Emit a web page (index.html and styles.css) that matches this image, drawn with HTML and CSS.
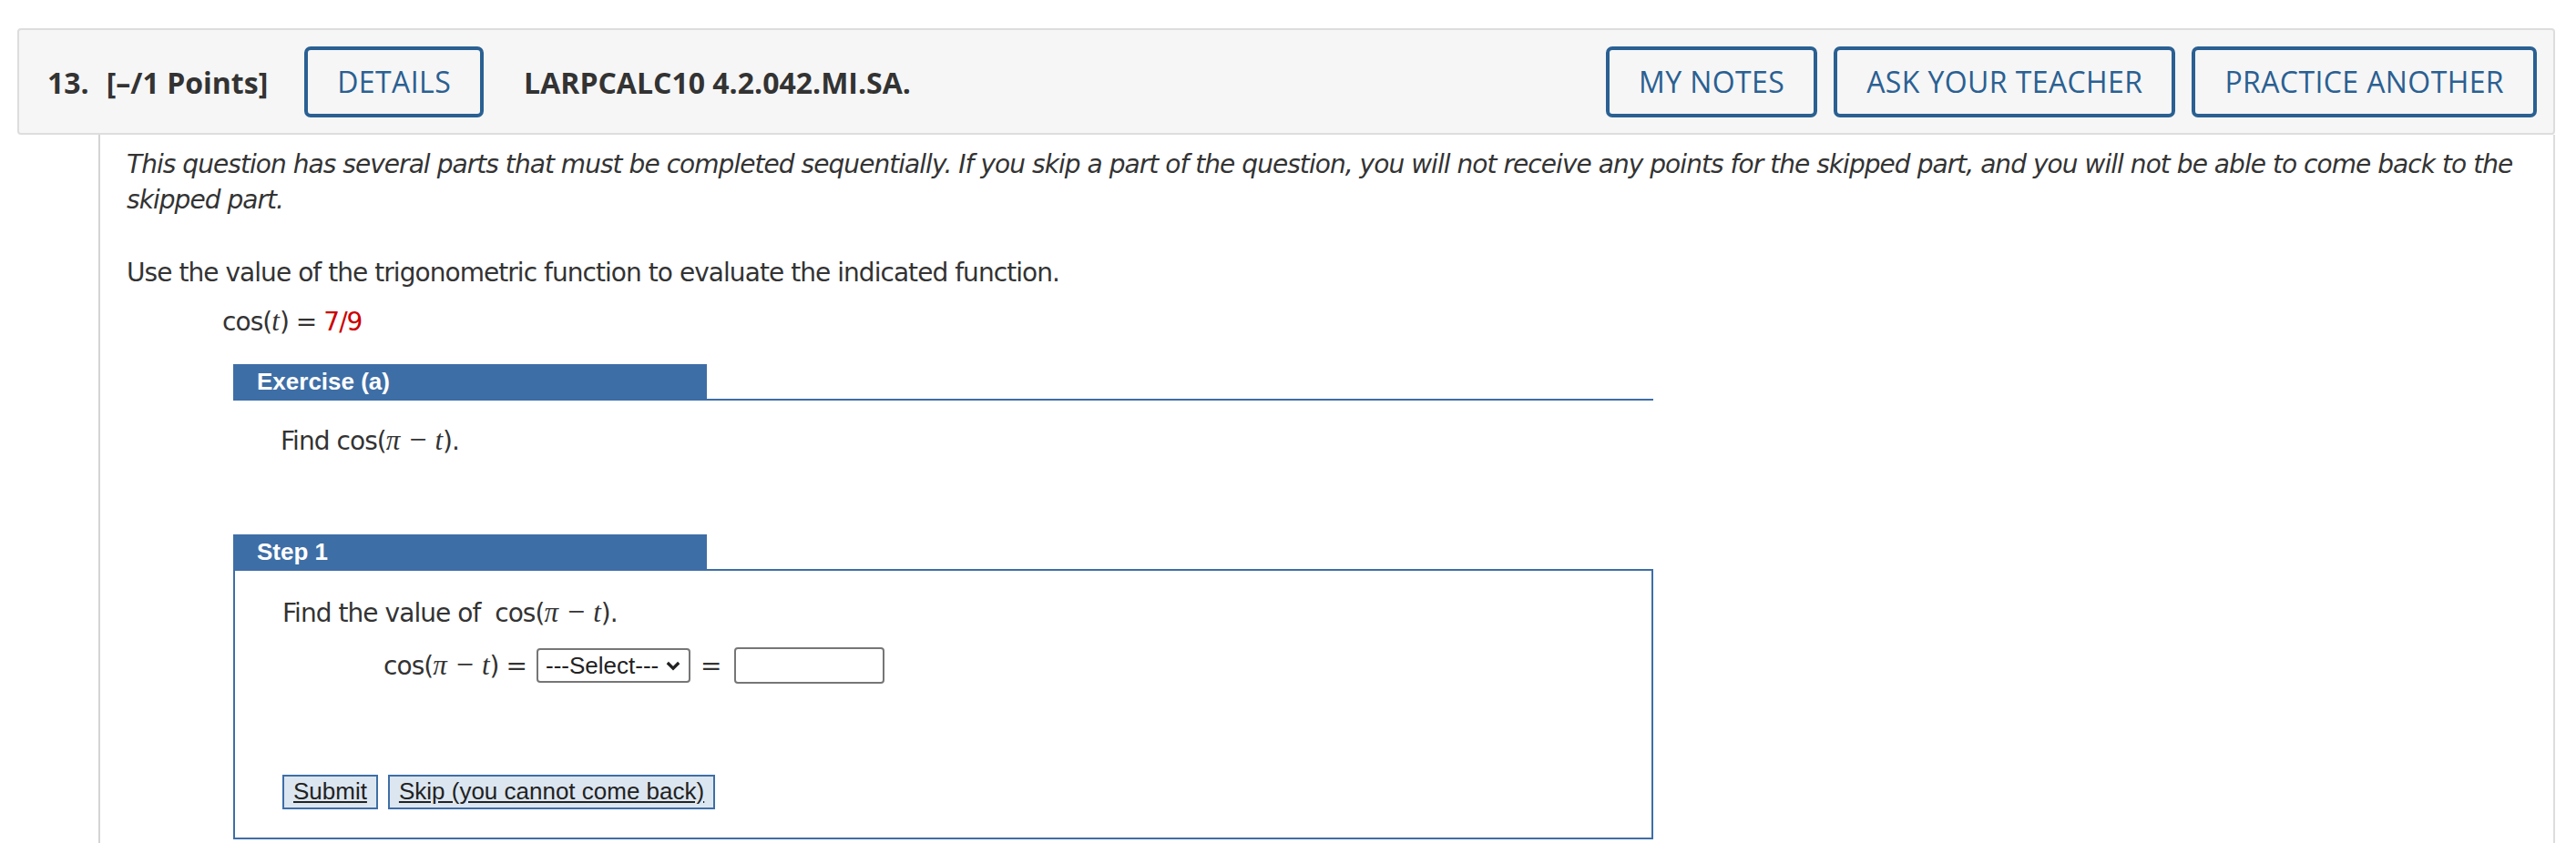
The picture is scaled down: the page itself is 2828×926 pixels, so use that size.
FILE: index.html
```html
<!DOCTYPE html>
<html lang="en">
<head>
<meta charset="utf-8">
<title>Question 13</title>
<link rel="stylesheet" href="styles.css">
</head>
<body>
<div class="page">
  <div class="qhead">
    <span class="qnum">13.</span>
    <span class="qpts">[–/1 Points]</span>
    <button class="hbtn details">DETAILS</button>
    <span class="qid">LARPCALC10 4.2.042.MI.SA.</span>
    <span class="spacer"></span>
    <div class="hactions">
      <button class="hbtn">MY NOTES</button>
      <button class="hbtn">ASK YOUR TEACHER</button>
      <button class="hbtn">PRACTICE ANOTHER</button>
    </div>
  </div>
  <div class="qbody">
    <p class="notice">This question has several parts that must be completed sequentially. If you skip a part of the question, you will not receive any points for the skipped part, and you will not be able to come back to the skipped part.</p>
    <p class="prompt">Use the value of the trigonometric function to evaluate the indicated function.</p>
    <p class="given">cos(<i class="m">t</i>) = <span class="red">7/9</span></p>
    <div class="exercise">
      <div class="bar-row"><div class="bar">Exercise (a)</div></div>
      <p class="ex-text">Find cos(<i class="m">π</i><span class="op">−</span><i class="m">t</i>).</p>
      <div class="step">
        <div class="bar">Step 1</div>
        <div class="step-box">
          <p class="step-text">Find the value of&nbsp; cos(<i class="m">π</i><span class="op">−</span><i class="m">t</i>).</p>
          <div class="eq-row">
            <span class="eq-lhs">cos(<i class="m">π</i><span class="op">−</span><i class="m">t</i>) =</span>
            <span class="sel-wrap">
              <select class="sel"><option>---Select---</option></select>
              <svg class="chev" viewBox="0 0 16 11" width="16" height="11"><path d="M1.8 2 L8 8.2 L14.2 2" fill="none" stroke="#222" stroke-width="3.2"/></svg>
            </span>
            <span class="eq">=</span>
            <input class="ans" type="text">
          </div>
          <div class="actions">
            <button class="sbtn">Submit</button>
            <button class="sbtn">Skip (you cannot come back)</button>
          </div>
        </div>
      </div>
    </div>
  </div>
</div>
</body>
</html>
```
FILE: styles.css
```css
* { box-sizing: border-box; }
html, body { margin: 0; padding: 0; background: #fff; }
body { font-family: "DejaVu Sans", Verdana, sans-serif; color: #333; overflow: hidden; }

.page { padding: 31px 23px 0 19px; }

.qhead {
  display: flex;
  align-items: center;
  background: #f6f6f6;
  border: 2px solid #dddddd;
  border-radius: 4px;
  padding: 18px 18px 17px 31px;
  font-family: "Open Sans", sans-serif;
  font-size: 32px;
  color: #333;
}
.qnum { font-weight: 700; margin-right: 19px; }
.qpts { font-weight: 700; margin-right: 40px; }
.qid { font-weight: 700; margin-left: 44px; }
.spacer { flex: 1; }
.hactions { display: flex; gap: 18px; }
.hbtn {
  font-family: "Open Sans", sans-serif;
  font-size: 32px;
  line-height: 46px;
  letter-spacing: 0.4px;
  color: #2a6092;
  background: transparent;
  border: 4px solid #2a6092;
  border-radius: 7px;
  padding: 12px 32px;
  margin: 0;
}

.qbody {
  margin-left: 89px;
  border-left: 2px solid #d4d4d4;
  border-right: 2px solid #dddddd;
  padding: 13px 30px 60px 29px;
  font-size: 28px;
  line-height: 39px;
  letter-spacing: -0.95px;
}
.qbody p { margin: 0; }
.notice { font-style: italic; }
.prompt { margin-top: 41px !important; }
.given { margin-top: 15px !important; padding-left: 105px; }
.red { color: #cc0000; }
.m { font-family: "Liberation Serif", "Times New Roman", serif; font-style: italic; font-size: 31px; line-height: 1; letter-spacing: 0; }
.op { font-family: "Liberation Serif", serif; margin: 0 9px 0 10px; font-size: 34px; line-height: 1; letter-spacing: 0; }

.exercise { margin: 27px 0 0 117px; width: 1559px; }
.bar-row { border-bottom: 2px solid #3e6ea6; }
.bar {
  width: 520px;
  height: 38px;
  background: #3e6ea6;
  color: #fff;
  font-family: "Liberation Sans", Arial, sans-serif;
  font-weight: 700;
  font-size: 26px;
  line-height: 38px;
  letter-spacing: 0;
  padding-left: 26px;
}
.ex-text { margin-top: 25px !important; padding-left: 52px; }

.step { margin-top: 83px; }
.step-box {
  border: 2px solid #3e6ea6;
  padding: 27px 52px 31px 52px;
}
.eq-row {
  display: flex;
  align-items: center;
  height: 40px;
  margin-top: 18px;
  padding-left: 111px;
}
.eq-lhs { margin-right: 11px; }
.sel-wrap { position: relative; display: inline-block; height: 38px; }
.sel {
  -webkit-appearance: none;
  appearance: none;
  display: block;
  width: 169px;
  height: 38px;
  border: 2px solid #767676;
  border-radius: 4px;
  background: #fff;
  font-family: "Liberation Sans", Arial, sans-serif;
  font-size: 26px;
  letter-spacing: 0;
  color: #222;
  padding: 0 0 0 8px;
  margin: 0;
}
.chev { position: absolute; right: 11px; top: 14px; }
.eq { margin: 0 14px 0 11px; }
.ans {
  width: 165px;
  height: 40px;
  border: 2px solid #767676;
  border-radius: 4px;
  background: #fff;
  margin: 0;
}
.actions { display: flex; gap: 11px; margin-top: 100px; }
.sbtn {
  font-family: "Liberation Sans", Arial, sans-serif;
  font-size: 26px;
  line-height: 31px;
  letter-spacing: 0;
  color: #222;
  text-decoration: underline;
  background: #dce6f0;
  border: 2px solid #3e6ea6;
  border-radius: 0;
  padding: 1px 10px 2px;
  margin: 0;
}
```
